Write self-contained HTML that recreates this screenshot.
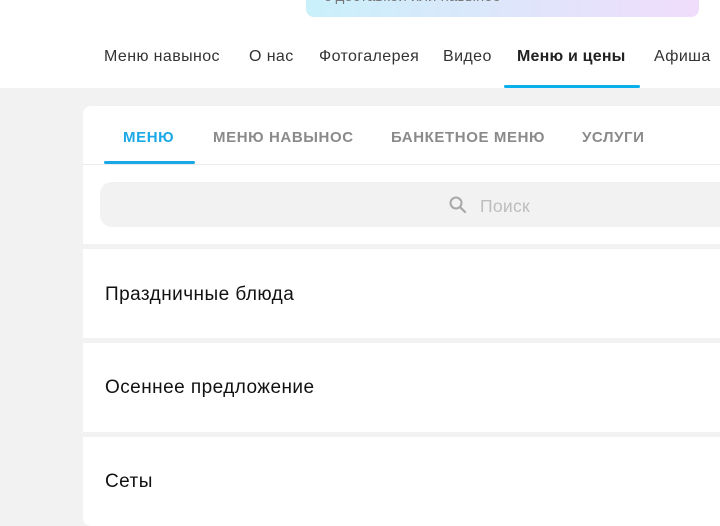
<!DOCTYPE html>
<html><head><meta charset="utf-8"><style>
*{margin:0;padding:0;box-sizing:border-box}
body{width:720px;height:512px;overflow:hidden;background:#f2f2f2;font-family:"Liberation Sans","DejaVu Sans",sans-serif;position:relative}
.hdr{position:absolute;left:0;top:0;width:720px;height:88px;background:#fff}
.banner{position:absolute;left:306px;top:-10px;width:393px;height:27px;border-radius:8px;background:linear-gradient(90deg,#c9f0fb,#dde6fb,#f0ddfb)}
.banner span{position:absolute;left:18px;top:-2px;font-size:15px;color:#777}
.nav{position:absolute;top:48px;font-size:16px;letter-spacing:.4px;color:#333;white-space:nowrap}
.nav.b{font-weight:bold;color:#222;letter-spacing:.2px}
.ul{position:absolute;left:504px;top:85px;width:136px;height:3px;background:#0ab0ec;border-radius:2px}
.card{position:absolute;left:83px;top:106px;width:660px;height:420px;background:#fff;border-radius:8px}
.tab{position:absolute;top:129px;font-size:15px;font-weight:bold;color:#8a8a8a;letter-spacing:.6px}
.tab.a{color:#1aa9e6}
.tul{position:absolute;left:104px;top:161px;width:91px;height:3px;background:#1aa9e6;border-radius:2px}
.div{position:absolute;left:83px;top:164px;width:640px;height:1px;background:#ebebeb}
.search{position:absolute;left:100px;top:182px;width:640px;height:45px;background:#f2f2f2;border-radius:12px}
.search span{position:absolute;left:380px;top:14px;font-size:17.5px;color:#bdbdbd;letter-spacing:.3px}
.sep{position:absolute;left:83px;width:640px;height:5px;background:#f2f2f2}
.row{position:absolute;left:105px;font-size:19px;letter-spacing:.45px;color:#111}
</style></head><body>
<div class="hdr"></div>
<div class="banner"><span>с доставкой или навынос</span></div>
<div class="nav" style="left:104px">Меню навынос</div>
<div class="nav" style="left:249px">О нас</div>
<div class="nav" style="left:319px">Фотогалерея</div>
<div class="nav" style="left:443px">Видео</div>
<div class="nav b" style="left:517px">Меню и цены</div>
<div class="nav" style="left:654px">Афиша</div>
<div class="ul"></div>
<div class="card"></div>
<div class="tab a" style="left:123px">МЕНЮ</div>
<div class="tab" style="left:213px">МЕНЮ НАВЫНОС</div>
<div class="tab" style="left:391px">БАНКЕТНОЕ МЕНЮ</div>
<div class="tab" style="left:582px">УСЛУГИ</div>
<div class="tul"></div>
<div class="div"></div>
<div class="search"><svg style="position:absolute;left:349px;top:14px" width="18" height="18" viewBox="0 0 18 18"><circle cx="7" cy="7" r="5.5" fill="none" stroke="#a8a8a8" stroke-width="2"/><line x1="11" y1="11" x2="16" y2="16" stroke="#a8a8a8" stroke-width="2.2" stroke-linecap="round"/></svg><span>Поиск</span></div>
<div class="sep" style="top:244px"></div>
<div class="row" style="top:284px">Праздничные блюда</div>
<div class="sep" style="top:338px"></div>
<div class="row" style="top:377px">Осеннее предложение</div>
<div class="sep" style="top:432px"></div>
<div class="row" style="top:471px">Сеты</div>
</body></html>
